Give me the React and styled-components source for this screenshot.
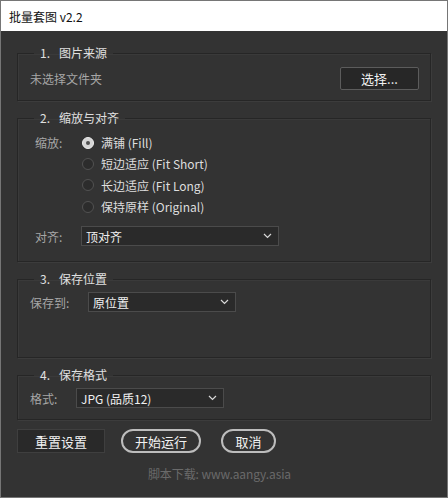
import React from "react";
import styled, { createGlobalStyle } from "styled-components";

const Global = createGlobalStyle`
  html, body {
    margin: 0;
    padding: 0;
    background: #323232;
  }
  * {
    box-sizing: border-box;
  }
`;

const Window = styled.div`
  width: 448px;
  height: 498px;
  background: #333333;
  border: 1px solid #767676;
  font-family: "Noto Sans CJK SC", "Noto Sans", sans-serif;
  font-size: 12px;
  display: flex;
  flex-direction: column;
  overflow: hidden;
`;

const TitleBar = styled.div`
  height: 30px;
  background: #ffffff;
  color: #111;
  padding-left: 8px;
  display: flex;
  align-items: center;
  font-size: 12px;
`;

const Body = styled.div`
  padding: 13px 16px 0 16px;
  display: flex;
  flex-direction: column;
`;

const Panel = styled.fieldset`
  margin: ${(p) => (p.$first ? "0" : "8px")} 0 0 0;
  border: 1px solid #262626;
  box-shadow: 1px 1px 0 #3c3c3c, inset 1px 1px 0 #3a3a3a;
  padding: ${(p) => p.$pad || "5px 11px 10px 12px"};
  min-width: 0;
`;

const Legend = styled.legend`
  margin-left: 4px;
  padding: 0 6px;
  line-height: 18px;
  color: #e0e0e0;
  font-size: 12px;

  b {
    font-weight: normal;
    margin-right: 9px;
  }
`;

const Row = styled.div`
  display: flex;
  align-items: center;
  justify-content: ${(p) => p.$justify || "flex-start"};
  height: ${(p) => p.$h || 20}px;
`;

const Muted = styled.span`
  color: #a6a6a6;
`;

const Label = styled.span`
  color: #a6a6a6;
  width: ${(p) => p.$w}px;
  padding-left: ${(p) => p.$indent || 0}px;
  flex-shrink: 0;
`;

const PickButton = styled.button`
  width: 79px;
  height: 23px;
  background: #272727;
  border: 1px solid #5c5c5c;
  border-radius: 2px;
  color: #f2f2f2;
  font-family: inherit;
  font-size: 13px;
  padding: 0;
`;

const ScaleGrid = styled.div`
  display: grid;
  grid-template-columns: 51px 1fr;
`;

const RadioList = styled.div`
  display: flex;
  flex-direction: column;
`;

const RadioRow = styled.label`
  display: flex;
  align-items: center;
  height: 21.3px;
  color: #dedede;
  gap: 7px;
`;

const RadioDot = styled.span`
  width: 12px;
  height: 12px;
  margin-left: 1px;
  border-radius: 50%;
  border: 1px solid ${(p) => (p.$on ? "#eeeeee" : "#525252")};
  background: ${(p) => (p.$on ? "#d6d6d6" : "#2c2c2c")};
  display: flex;
  align-items: center;
  justify-content: center;

  &::after {
    content: "";
    width: 4px;
    height: 4px;
    border-radius: 50%;
    background: ${(p) => (p.$on ? "#505050" : "transparent")};
  }
`;

const SideLabel = styled.span`
  color: #a6a6a6;
  padding-left: 5px;
  height: 21.3px;
  display: flex;
  align-items: center;
`;

const Select = styled.div`
  width: ${(p) => p.$w}px;
  height: 20px;
  background: #2a2a2a;
  border: 1px solid #4b4b4b;
  display: flex;
  align-items: center;
  justify-content: space-between;
  padding: 0 6px 0 4px;
  color: #f0f0f0;
  font-size: 12px;
`;

const Actions = styled.div`
  display: flex;
  align-items: center;
  margin-top: 9px;
  height: 24px;
`;

const SquareButton = styled.button`
  width: 88px;
  height: 24px;
  background: #292929;
  border: 1px solid #3f3f3f;
  color: #f2f2f2;
  font-family: inherit;
  font-size: 13px;
  padding: 0;
`;

const PillButton = styled.button`
  width: ${(p) => p.$w}px;
  height: 24px;
  margin-left: ${(p) => p.$gap}px;
  background: #333333;
  border: 2px solid #bdbdbd;
  border-radius: 12px;
  color: #f2f2f2;
  font-family: inherit;
  font-size: 13px;
  padding: 0;
`;

const Footer = styled.div`
  margin-top: 12px;
  text-align: center;
  color: #6a6a6a;
  line-height: 18px;
  padding-right: 9px;
  letter-spacing: -0.1px;
`;

const Chevron = () => (
  <svg width="9" height="6" viewBox="0 0 9 6">
    <polyline points="1,1 4.5,4.5 8,1" fill="none" stroke="#d8d8d8" strokeWidth="1.2" />
  </svg>
);

const scaleOptions = [
  { label: "满铺 (Fill)", on: true },
  { label: "短边适应 (Fit Short)" },
  { label: "长边适应 (Fit Long)" },
  { label: "保持原样 (Original)" },
];

export default function App() {
  return (
    <>
      <Global />
      <Window>
        <TitleBar>批量套图 v2.2</TitleBar>
        <Body>
          <Panel $first>
            <Legend>
              <b>1.</b>图片来源
            </Legend>
            <Row $h={23} $justify="space-between">
              <Muted>未选择文件夹</Muted>
              <PickButton>选择...</PickButton>
            </Row>
          </Panel>

          <Panel $pad="5px 11px 15px 12px">
            <Legend>
              <b>2.</b>缩放与对齐
            </Legend>
            <ScaleGrid>
              <SideLabel>缩放:</SideLabel>
              <RadioList>
                {scaleOptions.map((o) => (
                  <RadioRow key={o.label}>
                    <RadioDot $on={o.on} />
                    {o.label}
                  </RadioRow>
                ))}
              </RadioList>
            </ScaleGrid>
            <Row style={{ marginTop: 9 }}>
              <Label $w={51} $indent={5}>对齐:</Label>
              <Select $w={198}>
                <span>顶对齐</span>
                <Chevron />
              </Select>
            </Row>
          </Panel>

          <Panel $pad="4px 11px 45px 12px">
            <Legend>
              <b>3.</b>保存位置
            </Legend>
            <Row>
              <Label $w={58}>保存到:</Label>
              <Select $w={148}>
                <span>原位置</span>
                <Chevron />
              </Select>
            </Row>
          </Panel>

          <Panel $pad="4px 11px 11px 12px">
            <Legend>
              <b>4.</b>保存格式
            </Legend>
            <Row>
              <Label $w={46}>格式:</Label>
              <Select $w={148}>
                <span>JPG (品质12)</span>
                <Chevron />
              </Select>
            </Row>
          </Panel>

          <Actions>
            <SquareButton>重置设置</SquareButton>
            <PillButton $w={80} $gap={16}>开始运行</PillButton>
            <PillButton $w={55} $gap={20}>取消</PillButton>
          </Actions>

          <Footer>脚本下载: www.aangy.asia</Footer>
        </Body>
      </Window>
    </>
  );
}
